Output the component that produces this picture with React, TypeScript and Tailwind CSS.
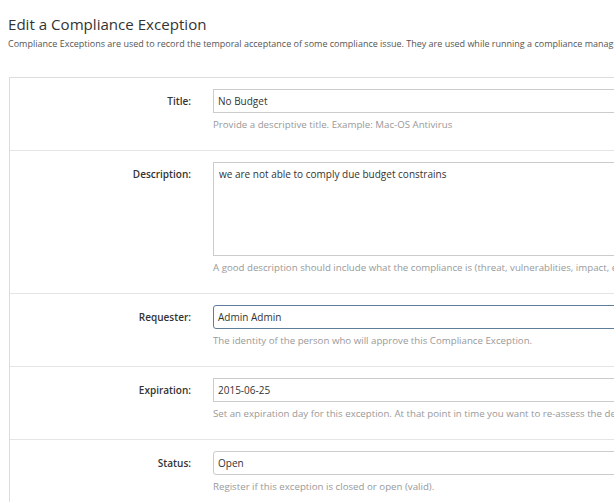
import React from 'react';

type Field = {
  label: string;
  value: string;
  help: string;
  kind?: 'input' | 'textarea' | 'focused' | 'select';
};

const fields: Field[] = [
  { label: 'Title:', value: 'No Budget', help: 'Provide a descriptive title. Example: Mac-OS Antivirus' },
  {
    label: 'Description:',
    value: 'we are not able to comply due budget constrains',
    help: 'A good description should include what the compliance is (threat, vulnerablities, impact, etc) and why it is being accepted.',
    kind: 'textarea',
  },
  {
    label: 'Requester:',
    value: 'Admin Admin',
    help: 'The identity of the person who will approve this Compliance Exception.',
    kind: 'focused',
  },
  {
    label: 'Expiration:',
    value: '2015-06-25',
    help: 'Set an expiration day for this exception. At that point in time you want to re-assess the decision and see if it is still valid.',
  },
  { label: 'Status:', value: 'Open', help: 'Register if this exception is closed or open (valid).', kind: 'select' },
];

const FieldControl: React.FC<{ field: Field }> = ({ field }) => {
  if (field.kind === 'textarea') {
    return (
      <div className="h-[94px] border border-[#cccccc] bg-white px-[5px] py-[4px] text-[10px] leading-[14px] text-[#333]">
        {field.value}
      </div>
    );
  }
  const border =
    field.kind === 'focused'
      ? 'border-[#5f7d9b] rounded-[3px]'
      : field.kind === 'select'
        ? 'border-[#cccccc] rounded-[3px]'
        : 'border-[#cccccc]';
  return (
    <div className={`flex h-[24px] items-center border bg-white px-[4px] text-[10px] text-[#333] ${border}`}>
      {field.value}
    </div>
  );
};

export default function App() {
  return (
    <div className="w-full overflow-hidden bg-white" style={{ fontFamily: '"Open Sans", "Liberation Sans", sans-serif' }}>
      <div className="w-[900px] pl-[8px]">
        <h1 className="mt-[13px] text-[15.1px] leading-[22px] font-normal text-[#333]">Edit a Compliance Exception</h1>
        <p className="mt-[1px] text-[9px] leading-[16px] whitespace-nowrap text-[#555]">
          Compliance Exceptions are used to record the temporal acceptance of some compliance issue. They are used while running a compliance management program.
        </p>

        <div className="mt-[25px] ml-[1px] border-t border-l border-[#dddddd]">
          {fields.map((f, i) => (
            <div key={f.label} className={`flex pt-[11px] pb-[16px] ${i > 0 ? 'border-t border-[#e5e5e5]' : ''}`}>
              <div className="flex h-[24px] w-[181px] shrink-0 items-center justify-end text-[10px] font-semibold text-[#333]">
                {f.label}
              </div>
              <div className="ml-[22px] flex-1">
                <FieldControl field={f} />
                <div className="mt-[3px] text-[9.7px] leading-[18px] whitespace-nowrap text-[#999]">{f.help}</div>
              </div>
            </div>
          ))}
        </div>
      </div>
    </div>
  );
}
